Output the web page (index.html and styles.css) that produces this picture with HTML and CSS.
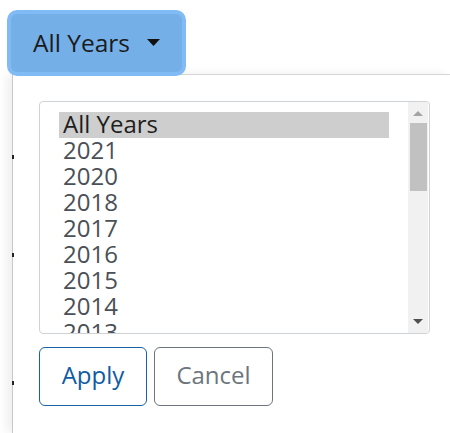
FILE: index.html
```html
<!DOCTYPE html>
<html>
<head>
<meta charset="utf-8">
<link rel="stylesheet" href="styles.css">
</head>
<body>
  <div class="page">
    <button class="toggle" type="button">
      <span class="toggle-label">All Years</span>
      <svg class="caret" width="13" height="7" viewBox="0 0 13 7"><path d="M0 0H13L6.5 7Z" fill="#111"/></svg>
    </button>
    <div class="panel">
      <span class="tick tick-1"></span>
      <span class="tick tick-2"></span>
      <span class="tick tick-3"></span>
      <div class="listbox">
        <div class="options">
          <div class="option selected">All Years</div>
          <div class="option">2021</div>
          <div class="option">2020</div>
          <div class="option">2018</div>
          <div class="option">2017</div>
          <div class="option">2016</div>
          <div class="option">2015</div>
          <div class="option">2014</div>
          <div class="option">2013</div>
        </div>
        <div class="scrollbar">
          <svg class="arrow" width="10" height="5" viewBox="0 0 10 5"><path d="M0 5H10L5 0Z" fill="#a3a3a3"/></svg>
          <div class="thumb"></div>
          <div class="track-space"></div>
          <svg class="arrow" width="10" height="5" viewBox="0 0 10 5"><path d="M0 0H10L5 5Z" fill="#505050"/></svg>
        </div>
      </div>
      <div class="actions">
        <button class="btn btn-apply" type="button">Apply</button>
        <button class="btn btn-cancel" type="button">Cancel</button>
      </div>
    </div>
  </div>
</body>
</html>
```

FILE: styles.css
```css
html, body {
  margin: 0;
  padding: 0;
  background: #ffffff;
}

body {
  font-family: "Open Sans", "Liberation Sans", sans-serif;
  overflow: hidden;
}

.page {
  display: flex;
  flex-direction: column;
  height: 433px;
}

.toggle {
  position: relative;
  z-index: 2;
  margin: 14px 0 0 11px;
  width: 171px;
  height: 58px;
  padding: 0 22px;
  display: flex;
  align-items: center;
  justify-content: space-between;
  background: #74afe8;
  border: none;
  border-radius: 6px;
  box-shadow: 0 0 0 4px #80bbf5;
  font-family: inherit;
  font-size: 24.5px;
  color: #1b1b1b;
  cursor: pointer;
}

.toggle-label {
  line-height: 1;
}

.caret {
  display: block;
  margin-top: -2px;
}

.panel {
  position: relative;
  flex: 1;
  margin: 2px 0 0 12px;
  padding: 26px 0 0 26px;
  border-top: 1px solid #d6d6d6;
  border-left: 1px solid #c8c8c8;
  box-shadow: -5px 0 10px rgba(0, 0, 0, 0.07);
  background: #ffffff;
}

.tick {
  position: absolute;
  left: -1px;
  width: 2px;
  height: 4px;
  background: #222;
}
.tick-1 { top: 80px; }
.tick-2 { top: 178px; }
.tick-3 { top: 306px; }

.listbox {
  width: 391px;
  height: 233px;
  box-sizing: border-box;
  border: 1px solid #cfd3d7;
  border-radius: 4px;
  display: flex;
  overflow: hidden;
}

.options {
  width: 368px;
  padding: 10px 0 0 19px;
  box-sizing: border-box;
  overflow: hidden;
}

.option {
  width: 330px;
  height: 26px;
  line-height: 24px;
  padding: 0 0 2px 4px;
  box-sizing: border-box;
  font-size: 24px;
  color: #4a5057;
  white-space: nowrap;
}

.option.selected {
  background: #cecece;
  color: #1e1e1e;
}

.scrollbar {
  width: 20px;
  background: #f1f1f1;
  display: flex;
  flex-direction: column;
  align-items: center;
  padding: 9px 0 9px;
  box-sizing: border-box;
}

.arrow {
  display: block;
  flex: none;
}

.thumb {
  flex: none;
  width: 17px;
  height: 68px;
  margin: 7px 0 0 1px;
  background: #c1c1c1;
}

.track-space {
  flex: 1;
}

.actions {
  display: flex;
  gap: 7px;
  margin-top: 13px;
}

.btn {
  height: 59px;
  box-sizing: border-box;
  background: #ffffff;
  border-radius: 6px;
  font-family: inherit;
  font-size: 24px;
  line-height: 1;
  padding: 0 0 3px;
  cursor: pointer;
}

.btn-apply {
  width: 108px;
  border: 1px solid #1761a5;
  color: #0f5ca3;
}

.btn-cancel {
  width: 119px;
  border: 1px solid #6c757d;
  color: #6c757d;
}
```
